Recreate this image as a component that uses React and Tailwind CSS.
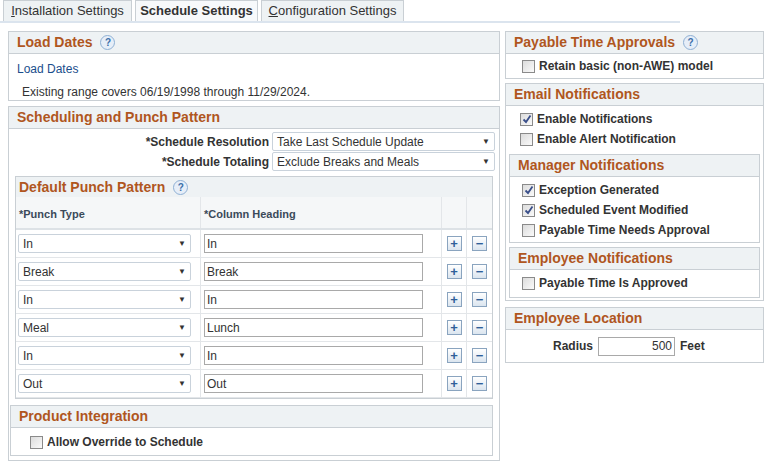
import React from "react";

const F = { fontFamily: '"Liberation Sans", Arial, sans-serif' };

function Help() {
  return (
    <span className="inline-flex h-[15px] w-[15px] items-center justify-center rounded-full border border-[#8fb0d4] bg-[#e6eef8] text-[10px] font-bold text-[#3b6ea8]">
      ?
    </span>
  );
}

function Box({ title, help, className = "", children }) {
  return (
    <div className={"border border-[#c9cfd4] bg-white " + className}>
      <div className="flex h-[22px] items-center gap-2 border-b border-[#c9cfd4] bg-[#eef2f4] px-[8px] text-[14px] font-bold text-[#b0561e]">
        {title}
        {help && <Help />}
      </div>
      {children}
    </div>
  );
}

function Check({ on, label, bold = true }) {
  return (
    <div className="flex h-[20px] items-center gap-[4px]">
      <span className="flex h-[13px] w-[13px] items-center justify-center border border-[#8a8a8a] bg-gradient-to-br from-[#dcdcdc] to-[#fafafa]">
        {on && (
          <svg width="10" height="10" viewBox="0 0 10 10">
            <path d="M1.5 5.5 L4 8 L8.5 1.5" stroke="#3a4f8a" strokeWidth="1.8" fill="none" />
          </svg>
        )}
      </span>
      <span className={"whitespace-nowrap text-[12px] text-[#333] " + (bold ? "font-bold" : "")}>{label}</span>
    </div>
  );
}

function Select({ value, w }) {
  return (
    <div className={"flex h-[19px] items-center justify-between rounded-[2px] border border-[#c9d2db] bg-white pl-[4px] pr-[4px] text-[12px] text-[#333] " + w}>
      <span>{value}</span>
      <span className="text-[8px]">▼</span>
    </div>
  );
}

function Btn({ minus }) {
  return (
    <span className="flex h-[15px] w-[15px] items-center justify-center border border-[#8aa4bf] bg-gradient-to-b from-[#ffffff] to-[#dbe5ef] text-[13px] font-bold leading-none text-[#2f5f99]">
      {minus ? "−" : "+"}
    </span>
  );
}

const rows = [
  ["In", "In"],
  ["Break", "Break"],
  ["In", "In"],
  ["Meal", "Lunch"],
  ["In", "In"],
  ["Out", "Out"],
];

export default function App() {
  return (
    <div style={F} className="h-[463px] w-[768px] overflow-hidden bg-white text-[12px] text-[#333]">
      <div className="flex h-[23px] items-end gap-[3px] border-b-[2px] border-[#dbe4ee] pl-[3px] w-[680px]">
        <div className="flex h-[21px] w-[129px] items-center justify-center border border-b-0 border-[#c9cfd4] bg-[#eef2f4] text-[13px] text-[#333]">
          <span><u>I</u>nstallation Settings</span>
        </div>
        <div className="flex h-[21px] w-[123px] items-center justify-center border border-b-0 border-[#c9cfd4] bg-[#f7f9fb] text-[13px] font-bold text-[#333]">
          Schedule Settings
        </div>
        <div className="flex h-[21px] w-[143px] items-center justify-center border border-b-0 border-[#c9cfd4] bg-[#eef2f4] text-[13px] text-[#333]">
          <span><u>C</u>onfiguration Settings</span>
        </div>
      </div>
      <div className="flex gap-[5px] pl-[8px] pt-[8px]">
        <div className="flex w-[492px] flex-col gap-[5px]">
          <Box title="Load Dates" help>
            <div className="h-[46px] pl-[8px] pt-[6px]">
              <div className="text-[12px] text-[#1a4e8c]">Load Dates</div>
              <div className="pl-[5px] pt-[5px] text-[12px]">Existing range covers 06/19/1998 through 11/29/2024.</div>
            </div>
          </Box>
          <Box title="Scheduling and Punch Pattern" className="h-[355px]">
            <div className="flex flex-col gap-[1px] pt-[3px]">
              <div className="flex items-center justify-end gap-[3px] pr-[4px]">
                <span className="whitespace-nowrap font-bold">*Schedule Resolution</span>
                <Select value="Take Last Schedule Update" w="w-[223px]" />
              </div>
              <div className="flex items-center justify-end gap-[3px] pr-[4px]">
                <span className="whitespace-nowrap font-bold">*Schedule Totaling</span>
                <Select value="Exclude Breaks and Meals" w="w-[223px]" />
              </div>
            </div>
            <div className="ml-[6px] mt-[5px] w-[478px] border border-[#c9cfd4]">
              <div className="flex h-[20px] items-center gap-2 bg-[#eef2f4] px-[3px] text-[14px] font-bold text-[#b0561e]">
                Default Punch Pattern <Help />
              </div>
              <div className="flex h-[33px] border-b-[2px] border-[#dde2e6] text-[11px] font-bold text-[#3b4a5a]">
                <div className="w-[185px] border-r border-[#e3e6e9] bg-[#f5f7f8] pl-[3px] pt-[9px]">*Punch Type</div>
                <div className="w-[241px] border-r border-[#e3e6e9] bg-[#f5f7f8] pl-[3px] pt-[9px]">*Column Heading</div>
                <div className="w-[25px] border-r border-[#e3e6e9] bg-[#f5f7f8]"></div>
                <div className="flex-1 bg-[#f5f7f8]"></div>
              </div>
              {rows.map((r, i) => (
                <div key={i} className="flex h-[28px] border-b border-[#e3e6e9]">
                  <div className="flex w-[185px] items-center border-r border-[#e3e6e9] pl-[2px]">
                    <Select value={r[0]} w="w-[173px]" />
                  </div>
                  <div className="flex w-[241px] items-center border-r border-[#e3e6e9] pl-[3px]">
                    <div className="flex h-[19px] w-[219px] items-center border border-[#a9a9a9] pl-[2px] text-[12px]">{r[1]}</div>
                  </div>
                  <div className="flex w-[25px] items-center justify-center border-r border-[#e3e6e9]"><Btn /></div>
                  <div className="flex flex-1 items-center justify-center"><Btn minus /></div>
                </div>
              ))}
            </div>
            <Box title="Product Integration" className="ml-[1px] mt-[6px] w-[483px]">
              <div className="h-[27px] pl-[19px] pt-[4px]">
                <Check label="Allow Override to Schedule" />
              </div>
            </Box>
          </Box>
        </div>
        <div className="flex w-[259px] flex-col gap-[4px]">
          <Box title="Payable Time Approvals" help>
            <div className="h-[24px] pl-[16px] pt-[2px]">
              <Check label="Retain basic (non-AWE) model" />
            </div>
          </Box>
          <Box title="Email Notifications">
            <div className="pl-[14px] pt-[3px]">
              <Check on label="Enable Notifications" />
              <Check label="Enable Alert Notification" />
            </div>
            <div className="px-[3px] pb-[4px] pt-[5px]">
              <Box title="Manager Notifications">
                <div className="pl-[12px] pt-[3px] pb-[2px]">
                  <Check on label="Exception Generated" />
                  <Check on label="Scheduled Event Modified" />
                  <Check label="Payable Time Needs Approval" />
                </div>
              </Box>
            </div>
            <div className="px-[3px] pb-[2px]">
              <Box title="Employee Notifications">
                <div className="h-[27px] pl-[12px] pt-[3px]">
                  <Check label="Payable Time Is Approved" />
                </div>
              </Box>
            </div>
          </Box>
          <Box title="Employee Location" className="mt-[2px]">
            <div className="flex h-[32px] items-center gap-[5px] pl-[47px]">
              <span className="font-bold">Radius</span>
              <div className="flex h-[19px] w-[77px] items-center justify-end border border-[#a9a9a9] pr-[2px]">500</div>
              <span className="font-bold">Feet</span>
            </div>
          </Box>
        </div>
      </div>
    </div>
  );
}
